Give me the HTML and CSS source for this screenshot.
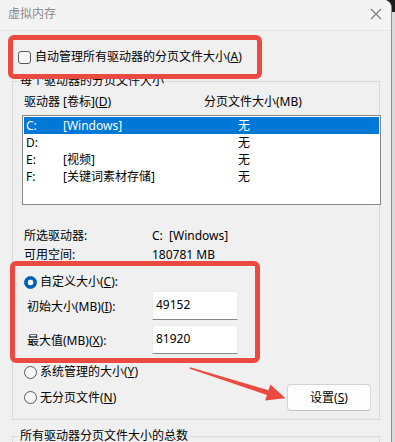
FILE: index.html
```html
<!DOCTYPE html>
<html lang="zh-CN">
<head>
    <meta charset="UTF-8">
    <meta name="viewport" content="width=device-width, initial-scale=1.0">
    <title>虚拟内存</title>
    <link rel="stylesheet" href="styles.css">
</head>
<body>
    <div class="window">
        <div class="titlebar">
            <span class="title">虚拟内存</span>
            <svg class="close" width="12" height="12" viewBox="0 0 12 12">
                <path d="M1 1L11 11M11 1L1 11" stroke="#7a7a7a" stroke-width="1.1" fill="none"/>
            </svg>
        </div>
        <div class="content">
            <label class="check-row"><span class="checkbox"></span><span>自动管理所有驱动器的分页文件大小(<u>A</u>)</span></label>

            <fieldset class="group">
                <legend>每个驱动器的分页文件大小</legend>
                <div class="list-head">
                    <span class="col-drive">驱动器 [卷标](<u>D</u>)</span>
                    <span>分页文件大小(MB)</span>
                </div>
                <div class="listbox">
                    <div class="row selected"><span>C:</span><span>[Windows]</span><span>无</span></div>
                    <div class="row"><span>D:</span><span></span><span>无</span></div>
                    <div class="row"><span>E:</span><span>[视频]</span><span>无</span></div>
                    <div class="row"><span>F:</span><span>[关键词素材存储]</span><span>无</span></div>
                </div>

                <div class="info">
                    <span>所选驱动器:</span><span>C:&nbsp;&nbsp;[Windows]</span>
                    <span>可用空间:</span><span>180781 MB</span>
                </div>

                <div class="radio-row"><span class="radio on"></span><span>自定义大小(<u>C</u>):</span></div>
                <div class="size-grid">
                    <span>初始大小(MB)(<u>I</u>):</span>
                    <div class="field">49152</div>
                    <span>最大值(MB)(<u>X</u>):</span>
                    <div class="field">81920</div>
                </div>
                <div class="radio-row system"><span class="radio"></span><span>系统管理的大小(<u>Y</u>)</span></div>
                <div class="radio-row none">
                    <span class="radio"></span><span>无分页文件(<u>N</u>)</span>
                    <button class="btn">设置(<u>S</u>)</button>
                </div>
            </fieldset>

            <fieldset class="group total">
                <legend>所有驱动器分页文件大小的总数</legend>
            </fieldset>
        </div>
    </div>

    <!-- red annotations drawn over the dialog -->
    <div class="mark mark-auto"></div>
    <div class="mark mark-custom"></div>
    <svg class="arrow" width="395" height="442" viewBox="0 0 395 442">
        <polygon points="190.2,367.2 268.5,390.2 270.4,384.6 285.5,398.2 265,400.6 267,395 189.8,368.8" fill="#ea4a3f"/>
    </svg>
</body>
</html>
```

FILE: styles.css
```css
body {
    margin: 0;
    font-family: "Noto Sans", "Noto Sans CJK SC", sans-serif;
    font-size: 12px;
    color: #000;
    background: linear-gradient(#1c1c1c 0 12px, #dadada 12px);
    width: 395px;
    height: 442px;
    overflow: hidden;
}
.window {
    width: 392px;
    height: 442px;
    box-sizing: border-box;
    background: #f0f0f0;
    border-right: 1px solid #8e8e8e;
    border-top-right-radius: 8px;
    overflow: hidden;
}
.titlebar {
    height: 31px;
    display: flex;
    align-items: center;
    justify-content: space-between;
    padding: 0 8px;
    background: #f3f3f3;
    border-bottom: 1px solid #e6e6e6;
    box-sizing: border-box;
}
.title {
    color: #8a8a8a;
    line-height: 16px;
    margin-top: -3px;
}
.close {
    margin-right: 1px;
    margin-top: -3px;
}
.content {
    padding: 17px 0 0 12px;
}
.check-row {
    display: flex;
    align-items: center;
    gap: 4px;
    padding-left: 6px;
    line-height: 18px;
}
.checkbox {
    width: 11px;
    height: 11px;
    border: 1px solid #5a5a5a;
    border-radius: 3px;
    background: #f7f7f7;
}
.group {
    width: 368px;
    box-sizing: border-box;
    margin: 8px 0 0;
    padding: 0 0 8px;
    border: 1px solid #d9d9d9;
}
.group legend {
    margin-left: 6px;
    padding: 0 1px;
    line-height: 14px;
}
.list-head {
    display: flex;
    padding-left: 11px;
    margin-top: 6px;
    line-height: 16px;
}
.col-drive {
    width: 180px;
}
.listbox {
    margin: 5px -2px 0 9px;
    height: 86px;
    padding: 1px;
    box-sizing: content-box;
    background: #fff;
    border: 1px solid #828790;
}
.row {
    display: grid;
    grid-template-columns: 37px 175px 1fr;
    height: 17px;
    line-height: 17px;
    padding-left: 2px;
}
.row.selected {
    background: #0078d7;
    color: #fff;
}
.info {
    display: grid;
    grid-template-columns: 128px 1fr;
    padding-left: 11px;
    margin-top: 21px;
    line-height: 19px;
}
.radio-row {
    display: flex;
    align-items: center;
    gap: 3px;
    padding-left: 11px;
    margin-top: 9px;
    line-height: 18px;
}
.radio {
    width: 11px;
    height: 11px;
    border: 1px solid #5a5a5a;
    border-radius: 50%;
    background: #f7f7f7;
}
.radio.on {
    border-color: #005fb8;
    background: radial-gradient(circle, #fff 0 2.6px, #005fb8 3.2px);
}
.size-grid {
    display: grid;
    grid-template-columns: 125px 86px;
    row-gap: 5px;
    align-items: center;
    padding-left: 14px;
}
.field {
    height: 29px;
    padding: 4px 0 0 3px;
    box-sizing: border-box;
    background: #fff;
    border: 1px solid #ececec;
    border-bottom-color: #868686;
    border-radius: 3px 3px 0 0;
    line-height: 17px;
}
.radio-row.none {
    margin-top: 3px;
    padding-right: 8px;
}
.btn {
    margin-left: auto;
    width: 84px;
    height: 27px;
    font: inherit;
    color: #000;
    background: #fdfdfd;
    border: 1px solid #d3d3d3;
    border-bottom-color: #c2c2c2;
    border-radius: 4px;
    padding: 0;
}
.group.total {
    margin-top: 9px;
    height: 40px;
}
.mark {
    position: absolute;
    border: 5px solid #ea4a3f;
    border-radius: 6px;
    box-sizing: border-box;
}
.mark-auto {
    left: 8px;
    top: 35px;
    width: 254px;
    height: 44px;
}
.mark-custom {
    left: 10px;
    top: 261px;
    width: 250px;
    height: 102px;
}
.arrow {
    position: absolute;
    left: 0;
    top: 0;
    pointer-events: none;
}
```
